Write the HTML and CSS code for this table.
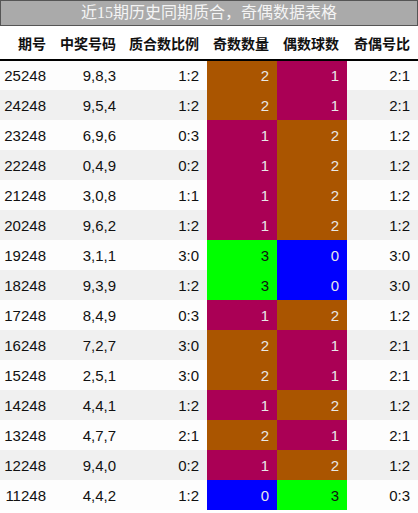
FILE: index.html
```html
<!DOCTYPE html>
<html lang="zh">
<head>
<meta charset="utf-8">
<link rel="stylesheet" href="styles.css">
</head>
<body>
<div class="title">近15期历史同期质合，奇偶数据表格</div>
<table class="data">
<colgroup>
<col class="c1"><col class="c2"><col class="c3"><col class="c4"><col class="c5"><col class="c6">
</colgroup>
<thead>
<tr><th>期号</th><th>中奖号码</th><th>质合数比例</th><th>奇数数量</th><th>偶数球数</th><th>奇偶号比</th></tr>
</thead>
<tbody>
<tr><td>25248</td><td>9,8,3</td><td>1:2</td><td class="n2">2</td><td class="n1">1</td><td>2:1</td></tr>
<tr><td>24248</td><td>9,5,4</td><td>1:2</td><td class="n2">2</td><td class="n1">1</td><td>2:1</td></tr>
<tr><td>23248</td><td>6,9,6</td><td>0:3</td><td class="n1">1</td><td class="n2">2</td><td>1:2</td></tr>
<tr><td>22248</td><td>0,4,9</td><td>0:2</td><td class="n1">1</td><td class="n2">2</td><td>1:2</td></tr>
<tr><td>21248</td><td>3,0,8</td><td>1:1</td><td class="n1">1</td><td class="n2">2</td><td>1:2</td></tr>
<tr><td>20248</td><td>9,6,2</td><td>1:2</td><td class="n1">1</td><td class="n2">2</td><td>1:2</td></tr>
<tr><td>19248</td><td>3,1,1</td><td>3:0</td><td class="n3">3</td><td class="n0">0</td><td>3:0</td></tr>
<tr><td>18248</td><td>9,3,9</td><td>1:2</td><td class="n3">3</td><td class="n0">0</td><td>3:0</td></tr>
<tr><td>17248</td><td>8,4,9</td><td>0:3</td><td class="n1">1</td><td class="n2">2</td><td>1:2</td></tr>
<tr><td>16248</td><td>7,2,7</td><td>3:0</td><td class="n2">2</td><td class="n1">1</td><td>2:1</td></tr>
<tr><td>15248</td><td>2,5,1</td><td>3:0</td><td class="n2">2</td><td class="n1">1</td><td>2:1</td></tr>
<tr><td>14248</td><td>4,4,1</td><td>1:2</td><td class="n1">1</td><td class="n2">2</td><td>1:2</td></tr>
<tr><td>13248</td><td>4,7,7</td><td>2:1</td><td class="n2">2</td><td class="n1">1</td><td>2:1</td></tr>
<tr><td>12248</td><td>9,4,0</td><td>0:2</td><td class="n1">1</td><td class="n2">2</td><td>1:2</td></tr>
<tr><td>11248</td><td>4,4,2</td><td>1:2</td><td class="n0">0</td><td class="n3">3</td><td>0:3</td></tr>
</tbody>
</table>
</body>
</html>
```

FILE: styles.css
```css
html, body {
  margin: 0;
  padding: 0;
  background: #ffffff;
}

.title {
  box-sizing: border-box;
  width: 418px;
  height: 26px;
  background: #aaaaaa;
  border: 1px solid #555555;
  color: #f4f4f4;
  font-family: "Liberation Serif", "Noto Sans CJK SC", serif;
  font-size: 16px;
  line-height: 24px;
  text-align: center;
}

.data {
  width: 418px;
  table-layout: fixed;
  border-collapse: collapse;
  font-family: "Liberation Sans", "Noto Sans CJK SC", sans-serif;
}

.c1 { width: 54px; }
.c2 { width: 70px; }
.c3 { width: 83px; }
.c4 { width: 70px; }
.c5 { width: 70px; }
.c6 { width: 71px; }

.data th {
  height: 34px;
  padding: 0 8px 0 0;
  text-align: right;
  font-size: 14px;
  font-weight: bold;
  color: #111111;
  border-bottom: 2px solid #000000;
  box-sizing: border-box;
}

.data td {
  height: 30px;
  padding: 0 8px 0 0;
  text-align: right;
  font-size: 15px;
  color: #111111;
  box-sizing: border-box;
}

.data tbody tr:nth-child(odd) { background: #fdfdfd; }
.data tbody tr:nth-child(even) { background: #f0f0f0; }

.data td.n0 { background: #0000ff; color: #e8e8e8; }
.data td.n1 { background: #aa0055; color: #e8e8e8; }
.data td.n2 { background: #aa5500; color: #e8e8e8; }
.data td.n3 { background: #00ff00; color: #111111; }
```
